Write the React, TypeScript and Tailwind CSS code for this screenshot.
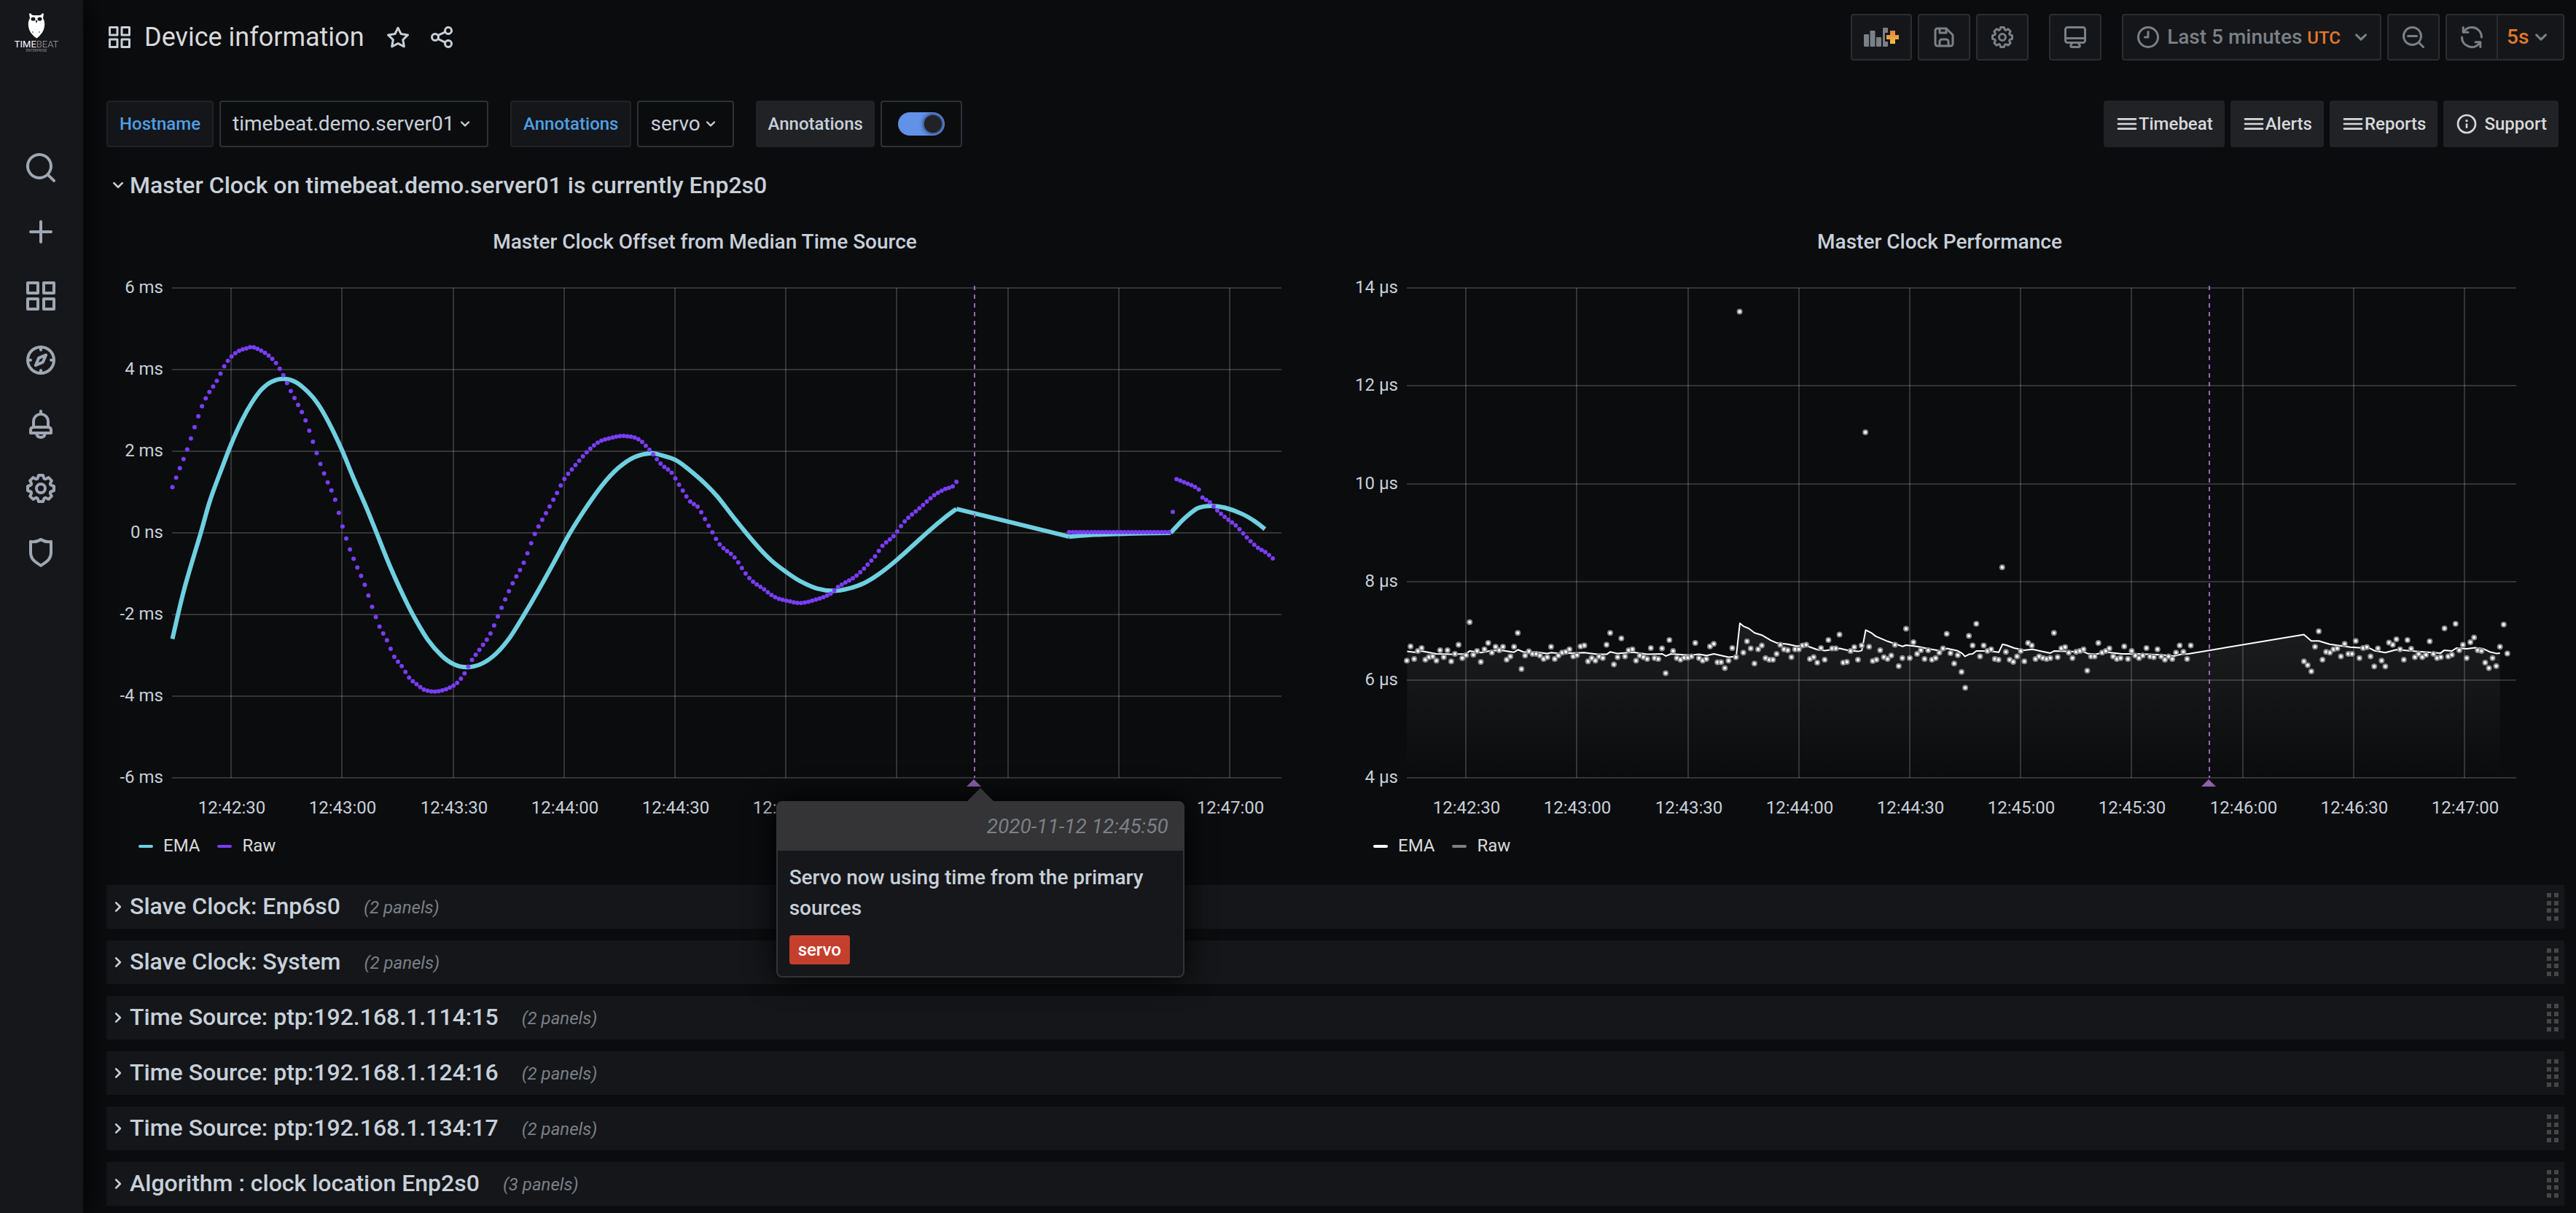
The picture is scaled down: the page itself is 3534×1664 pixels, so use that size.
import { ReactNode, useState } from "react";

type Point = [number, number];

// plot area inside the chart's viewBox
const LEFT = 90;
const RIGHT = 1612;
const TOP = 31;
const BOTTOM = 703;
const SPAN = 300; // seconds

const X_TICKS = [
  "12:42:30",
  "12:43:00",
  "12:43:30",
  "12:44:00",
  "12:44:30",
  "12:45:00",
  "12:45:30",
  "12:46:00",
  "12:46:30",
  "12:47:00",
];

const xOf = (t: number) => LEFT + (t / SPAN) * (RIGHT - LEFT);

const decode =
  (t0: number, perSecond: number, base: number, baseCount: number, perUnit: number) =>
  ([a, b]: Point): Point => [(a - t0) / perSecond, base + (baseCount - b) / perUnit];

const offsetA = decode(175, 9.25, 0, 908.5, 137.2);
const offsetB = decode(-1156.8, 8.838, 0, 365, 107.1);
const perfA = decode(164, 9.25, 6, 1100, 117.1);
const perfB = decode(-1245.2, 8.897, 6, 1100, 117.1);

const offsetEma: Point[][] = [
  [
    ...(
      [
        [176, 1265], [205, 1100], [247, 908], [270, 800], [300, 690], [323, 610], [350, 530], [375, 470],
        [400, 425], [425, 400], [454, 391], [485, 402], [515, 435], [540, 475], [570, 545], [600, 630],
        [630, 728], [660, 820], [690, 920], [720, 1020], [750, 1110], [780, 1190], [815, 1268], [850, 1322],
        [880, 1350], [914, 1360], [950, 1348], [985, 1315], [1020, 1260], [1055, 1185], [1090, 1105],
        [1130, 1008], [1170, 910], [1210, 825], [1250, 750], [1290, 692], [1330, 655], [1373, 641],
        [1400, 648], [1435, 664], [1470, 698], [1510, 745], [1540, 788],
      ] as Point[]
    ).map(offsetA),
    ...(
      [
        [190, 331], [240, 397], [275, 437], [310, 467], [345, 492], [385, 511], [425, 517], [460, 511],
        [495, 498], [530, 475], [570, 441], [610, 402], [650, 362], [690, 325], [718, 302],
      ] as Point[]
    ).map(offsetB),
  ],
  ([[718, 302], [987, 375]] as Point[]).map(offsetB),
  ([[987, 375], [1050, 370], [1130, 367], [1230, 365]] as Point[]).map(offsetB),
  (
    [
      [1230, 365], [1240, 353], [1265, 325], [1295, 300], [1327, 294], [1360, 299], [1400, 315],
      [1430, 334], [1455, 355],
    ] as Point[]
  ).map(offsetB),
];

const offsetRaw: Point[][] = [
  [
    ...(
      [
        [176, 755], [194, 693], [213, 628], [231, 555], [250, 483], [268, 436], [287, 398], [305, 350],
        [323, 317], [342, 297], [360, 289], [375, 284], [398, 296], [416, 312], [434, 336], [454, 380],
        [472, 432], [490, 477], [508, 527], [527, 600], [546, 677], [564, 737], [583, 797], [601, 885],
        [620, 964], [638, 1023], [657, 1083], [675, 1155], [694, 1223], [712, 1268], [731, 1325],
        [750, 1357], [768, 1395], [786, 1416], [805, 1435], [832, 1442], [860, 1434], [888, 1413],
        [907, 1380], [925, 1336], [943, 1303], [971, 1248], [999, 1161], [1027, 1078], [1054, 1011],
        [1082, 914], [1110, 843], [1137, 777], [1156, 728], [1184, 681], [1212, 638], [1240, 605],
        [1268, 591], [1304, 583], [1341, 593], [1369, 629], [1397, 676], [1425, 707], [1443, 746],
        [1471, 803], [1490, 821], [1517, 884], [1545, 947],
      ] as Point[]
    ).map(offsetA),
    ...(
      [
        [187, 429], [223, 484], [258, 513], [285, 534], [320, 545], [346, 549], [382, 540], [417, 525],
        [435, 507], [479, 477], [523, 427], [541, 399], [568, 373], [594, 335], [630, 300], [665, 266],
        [691, 250], [709, 243], [718, 231],
      ] as Point[]
    ).map(offsetB),
  ],
  ([[987, 363], [1230, 363]] as Point[]).map(offsetB),
  ([[1235, 310]] as Point[]).map(offsetB),
  (
    [
      [1244, 224], [1262, 232], [1297, 251], [1305, 271], [1323, 284], [1341, 306], [1367, 330],
      [1385, 345], [1411, 376], [1438, 404], [1456, 415], [1474, 432],
    ] as Point[]
  ).map(offsetB),
];

const perfEma: Point[] = [
  ...(
    [
      [165, 1032], [183, 1034], [200, 1031], [238, 1038], [275, 1039], [312, 1038], [321, 1031],
      [350, 1035], [375, 1030], [405, 1030], [432, 1034], [442, 1028], [455, 1033], [490, 1034],
      [515, 1037], [525, 1035], [550, 1037], [608, 1035], [640, 1039], [664, 1039], [673, 1033],
      [690, 1037], [730, 1034], [765, 1039], [803, 1038], [812, 1043], [825, 1038], [870, 1041],
      [895, 1039], [914, 1042], [932, 1038], [969, 1046], [988, 1044], [997, 965], [1006, 972],
      [1019, 977], [1034, 988], [1052, 993], [1075, 1006], [1090, 1012], [1117, 1015], [1136, 1019],
      [1168, 1020], [1191, 1028], [1210, 1030], [1247, 1025], [1270, 1030], [1293, 1032], [1302, 1030],
      [1312, 981], [1325, 987], [1337, 996], [1367, 1008], [1404, 1020], [1413, 1017], [1440, 1020],
      [1469, 1026], [1500, 1031], [1515, 1025], [1540, 1030], [1552, 1036],
    ] as Point[]
  ).map(perfA),
  ...(
    [
      [98, 1044], [107, 1039], [116, 1038], [125, 1031], [155, 1031], [179, 1034], [188, 1015],
      [197, 1017], [216, 1024], [240, 1029], [260, 1027], [303, 1036], [312, 1031], [383, 1033],
      [392, 1037], [410, 1039], [440, 1034], [475, 1038], [515, 1038], [570, 1040], [600, 1043],
      [618, 1039], [635, 1038], [913, 992], [931, 1007], [949, 1007], [975, 1015], [1025, 1022],
      [1073, 1025], [1082, 1030], [1109, 1035], [1135, 1028], [1200, 1033], [1242, 1036], [1251, 1029],
      [1269, 1031], [1280, 1024], [1305, 1026], [1325, 1023], [1345, 1026], [1360, 1033], [1376, 1037],
      [1385, 1036],
    ] as Point[]
  ).map(perfB),
];

// one reading per second, before and after the gap in the series
const perfBefore = [
  1054, 1020, 1050, 1031, 1024, 1052, 1046, 1044, 1054, 1029, 1046, 1029, 1056, 1038, 1016, 1048, 1041,
  962, 1040, 1031, 1057, 1027, 1012, 1035, 1021, 1029, 1021, 1052, 1044, 1021, 988, 1074, 1042, 1032,
  1038, 1038, 1042, 1050, 1046, 1021, 1050, 1042, 1035, 1033, 1027, 1044, 1041, 1020, 1018, 1056, 1048,
  1054, 1044, 1048, 1016, 988, 1063, 1046, 1001, 1044, 1029, 1027, 1054, 1042, 1046, 1050, 1024, 1048,
  1050, 1025, 1084, 1005, 1031, 1048, 1052, 1047, 1047, 1044, 1012, 1048, 1054, 1050, 1020, 1014, 1058,
  1058, 1072, 1054, 1024, 1046, 220, 1035, 1008, 1025, 1061, 1027, 1018, 1048, 1052, 1052, 1038, 1016,
  1027, 1029, 1046, 1027, 1027, 1018, 1016, 1050, 1046, 1059, 1024, 1052, 1005, 1025, 1025, 992, 1059,
  1057, 1031, 1022, 1052, 1018, 508, 1021, 1055, 1052, 1029, 1046, 1050, 1042, 1016, 1067, 1048, 978,
  1048, 1010, 1038, 1029, 1050, 1029, 1052, 1048, 1035, 1025, 990, 1036, 1061, 1041, 1081, 1119, 995,
  1018, 966, 1044, 1018, 1031, 1027, 1050, 1052, 831, 1033, 1052, 1057, 1044, 1031, 1056, 1012, 1018,
  1050, 1044, 1048, 1050, 1048, 988, 1046, 1025, 1022, 1035, 1048, 1033, 1031, 1027, 1078, 1044, 1044,
  1012, 1035, 1031, 1025, 1044, 1050, 1048, 1020, 1050, 1031, 1042, 1048, 1042, 1024, 1044, 1046, 1027,
  1044, 1052, 1044, 1050, 1035, 1018, 1033, 1050, 1018,
];
const perfAfter = [
  1056, 1065, 1080, 1021, 984, 1052, 1033, 1035, 1027, 1025, 1044, 1014, 1038, 1038, 1007, 1048, 1024,
  1022, 1044, 1068, 1025, 1054, 1068, 1011, 1016, 1003, 1027, 1052, 1005, 1026, 1046, 1038, 1046, 1040,
  1008, 1038, 1048, 1046, 977, 1044, 1040, 966, 1029, 1016, 1048, 1010, 999, 1029, 1031, 1059, 1072,
  1048, 1067, 1021, 968, 1037,
];
const perfRaw: Point[] = [
  ...perfBefore.map((c, i): Point => [i, 6 + (1100 - c) / 117.1]),
  ...perfAfter.map((c, i): Point => [i + 242.6, 6 + (1100 - c) / 117.1]),
];

// resample to one point per second (hermite between the stored points)
function everySecond(points: Point[]): Point[] {
  if (points.length < 2) return points;
  const slope = (i: number) => {
    const a = points[Math.max(i - 1, 0)];
    const b = points[Math.min(i + 1, points.length - 1)];
    return (b[1] - a[1]) / (b[0] - a[0]);
  };
  const out: Point[] = [];
  const end = points[points.length - 1][0];
  let k = 0;
  for (let t = points[0][0]; t <= end + 0.1; t += 1) {
    while (k < points.length - 2 && points[k + 1][0] < t) k++;
    const [t1, v1] = points[k];
    const [t2, v2] = points[k + 1];
    const h = t2 - t1;
    const s = (t - t1) / h;
    const s2 = s * s;
    const s3 = s2 * s;
    out.push([
      t,
      (2 * s3 - 3 * s2 + 1) * v1 +
        (s3 - 2 * s2 + s) * h * slope(k) +
        (3 * s2 - 2 * s3) * v2 +
        (s3 - s2) * h * slope(k + 1),
    ]);
  }
  return out;
}

function linePath(p: Point[]) {
  return p.map(([x, y], i) => `${i ? "L" : "M"}${x.toFixed(1)} ${y.toFixed(1)}`).join("");
}

// Catmull-Rom spline as bezier segments
function smoothPath(p: Point[]) {
  let d = `M${p[0][0].toFixed(1)} ${p[0][1].toFixed(1)}`;
  for (let i = 0; i < p.length - 1; i++) {
    const a = p[i - 1] ?? p[i];
    const b = p[i];
    const c = p[i + 1];
    const e = p[i + 2] ?? c;
    const nums = [
      b[0] + (c[0] - a[0]) / 6,
      b[1] + (c[1] - a[1]) / 6,
      c[0] - (e[0] - b[0]) / 6,
      c[1] - (e[1] - b[1]) / 6,
      c[0],
      c[1],
    ];
    d += "C" + nums.map((n) => n.toFixed(1)).join(" ");
  }
  return d;
}

const icons = {
  apps: "M10,13H3a1,1,0,0,0-1,1v7a1,1,0,0,0,1,1h7a1,1,0,0,0,1-1V14A1,1,0,0,0,10,13ZM9,20H4V15H9ZM21,2H14a1,1,0,0,0-1,1v7a1,1,0,0,0,1,1h7a1,1,0,0,0,1-1V3A1,1,0,0,0,21,2ZM20,9H15V4h5Zm1,4H14a1,1,0,0,0-1,1v7a1,1,0,0,0,1,1h7a1,1,0,0,0,1-1V14A1,1,0,0,0,21,13Zm-1,7H15V15h5ZM10,2H3A1,1,0,0,0,2,3v7a1,1,0,0,0,1,1h7a1,1,0,0,0,1-1V3A1,1,0,0,0,10,2ZM9,9H4V4H9Z",
  search:
    "M21.71,20.29,18,16.61A9,9,0,1,0,16.61,18l3.68,3.68a1,1,0,0,0,1.42,0A1,1,0,0,0,21.71,20.29ZM11,18a7,7,0,1,1,7-7A7,7,0,0,1,11,18Z",
  plus: "M19,11H13V5a1,1,0,0,0-2,0v6H5a1,1,0,0,0,0,2h6v6a1,1,0,0,0,2,0V13h6a1,1,0,0,0,0-2Z",
  compass:
    "M12,2A10,10,0,1,0,22,12,10,10,0,0,0,12,2Zm1,17.93V19a1,1,0,0,0-2,0v.93A8,8,0,0,1,4.07,13H5a1,1,0,0,0,0-2H4.07A8,8,0,0,1,11,4.07V5a1,1,0,0,0,2,0V4.07A8,8,0,0,1,19.93,11H19a1,1,0,0,0,0,2h.93A8,8,0,0,1,13,19.93ZM15.14,7.55l-5,2.12a1,1,0,0,0-.52.52l-2.12,5a1,1,0,0,0,.21,1.1,1,1,0,0,0,.7.3.93.93,0,0,0,.4-.09l5-2.12a1,1,0,0,0,.52-.52l2.12-5a1,1,0,0,0-1.31-1.31Zm-2.49,5.1-2.28,1,1-2.28,2.28-1Z",
  bell: "M18,13.18V10a6,6,0,0,0-5-5.91V3a1,1,0,0,0-2,0V4.09A6,6,0,0,0,6,10v3.18A3,3,0,0,0,4,16v2a1,1,0,0,0,1,1H8.14a4,4,0,0,0,7.72,0H19a1,1,0,0,0,1-1V16A3,3,0,0,0,18,13.18ZM8,10a4,4,0,0,1,8,0v3H8Zm4,10a2,2,0,0,1-1.72-1h3.44A2,2,0,0,1,12,20Zm6-3H6V16a1,1,0,0,1,1-1H17a1,1,0,0,1,1,1Z",
  cog: "M21.32,9.55l-1.89-.63.89-1.78A1,1,0,0,0,20.13,6L18,3.87a1,1,0,0,0-1.15-.19l-1.78.89-.63-1.89A1,1,0,0,0,13.5,2h-3a1,1,0,0,0-.95.68L8.92,4.57,7.14,3.68A1,1,0,0,0,6,3.87L3.87,6a1,1,0,0,0-.19,1.15l.89,1.78-1.89.63A1,1,0,0,0,2,10.5v3a1,1,0,0,0,.68.95l1.89.63-.89,1.78A1,1,0,0,0,3.87,18L6,20.13a1,1,0,0,0,1.15.19l1.78-.89.63,1.89a1,1,0,0,0,.95.68h3a1,1,0,0,0,.95-.68l.63-1.89,1.78.89A1,1,0,0,0,18,20.13L20.13,18a1,1,0,0,0,.19-1.15l-.89-1.78,1.89-.63A1,1,0,0,0,22,13.5v-3A1,1,0,0,0,21.32,9.55ZM20,12.78l-1.2.4A2,2,0,0,0,17.64,16l.57,1.14-1.1,1.1L16,17.64a2,2,0,0,0-2.79,1.16l-.4,1.2H11.22l-.4-1.2A2,2,0,0,0,8,17.64l-1.14.57-1.1-1.1L6.36,16A2,2,0,0,0,5.2,13.18L4,12.78V11.22l1.2-.4A2,2,0,0,0,6.36,8L5.79,6.89l1.1-1.1L8,6.36A2,2,0,0,0,10.82,5.2l.4-1.2h1.56l.4,1.2A2,2,0,0,0,16,6.36l1.14-.57,1.1,1.1L17.64,8a2,2,0,0,0,1.16,2.79l1.2.4ZM12,8a4,4,0,1,0,4,4A4,4,0,0,0,12,8Zm0,6a2,2,0,1,1,2-2A2,2,0,0,1,12,14Z",
  shield:
    "M19.63,3.65a1,1,0,0,0-.84-.2,8,8,0,0,1-6.22-1.27,1,1,0,0,0-1.14,0A8,8,0,0,1,5.21,3.45a1,1,0,0,0-.84.2A1,1,0,0,0,4,4.43v7.45a9,9,0,0,0,3.77,7.33l3.65,2.6a1,1,0,0,0,1.16,0l3.65-2.6A9,9,0,0,0,20,11.88V4.43A1,1,0,0,0,19.63,3.65ZM18,11.88a7,7,0,0,1-2.93,5.7L12,19.77,8.93,17.58A7,7,0,0,1,6,11.88V5.58a10,10,0,0,0,6-1.39,10,10,0,0,0,6,1.39Z",
  star: "M22,9.67A1,1,0,0,0,21.14,9l-5.69-.83L12.9,3a1,1,0,0,0-1.8,0L8.55,8.16,2.86,9a1,1,0,0,0-.81.68,1,1,0,0,0,.25,1l4.13,4-1,5.68A1,1,0,0,0,6.9,21.44L12,18.77l5.1,2.67a.93.93,0,0,0,.46.12,1,1,0,0,0,.59-.19,1,1,0,0,0,.4-1l-1-5.68,4.13-4A1,1,0,0,0,22,9.67Zm-6.15,4a1,1,0,0,0-.29.88l.72,4.2-3.76-2a1.06,1.06,0,0,0-.94,0l-3.76,2,.72-4.2a1,1,0,0,0-.29-.88l-3-3,4.21-.61a1,1,0,0,0,.76-.55L12,5.7l1.88,3.82a1,1,0,0,0,.76.55l4.21.61Z",
  share:
    "M18,14a4,4,0,0,0-3.08,1.48l-5.1-2.35a3.64,3.64,0,0,0,0-2.26l5.1-2.35A4,4,0,1,0,14,6a4.17,4.17,0,0,0,.07.71L8.79,9.14a4,4,0,1,0,0,5.72l5.28,2.43A4.17,4.17,0,0,0,14,18a4,4,0,1,0,4-4ZM18,4a2,2,0,1,1-2,2A2,2,0,0,1,18,4ZM6,14a2,2,0,1,1,2-2A2,2,0,0,1,6,14Zm12,6a2,2,0,1,1,2-2A2,2,0,0,1,18,20Z",
  save: "M20.71,9.29l-6-6a1,1,0,0,0-.32-.21A1.09,1.09,0,0,0,14,3H6A3,3,0,0,0,3,6V18a3,3,0,0,0,3,3H18a3,3,0,0,0,3-3V10A1,1,0,0,0,20.71,9.29ZM9,5h4V7H9Zm6,14H9V16a1,1,0,0,1,1-1h4a1,1,0,0,1,1,1Zm4-1a1,1,0,0,1-1,1H17V16a3,3,0,0,0-3-3H10a3,3,0,0,0-3,3v3H6a1,1,0,0,1-1-1V6A1,1,0,0,1,6,5H7V8A1,1,0,0,0,8,9h6a1,1,0,0,0,1-1V6.41l4,4Z",
  monitor:
    "M19,2H5A3,3,0,0,0,2,5V15a3,3,0,0,0,3,3H7.64l-.58,1a2,2,0,0,0,0,2,2,2,0,0,0,1.75,1h6.46A2,2,0,0,0,17,21a2,2,0,0,0,0-2l-.59-1H19a3,3,0,0,0,3-3V5A3,3,0,0,0,19,2ZM8.77,20,10,18H14l1.2,2ZM20,15a1,1,0,0,1-1,1H5a1,1,0,0,1-1-1V14H20Zm0-3H4V5A1,1,0,0,1,5,4H19a1,1,0,0,1,1,1Z",
  clock:
    "M12,2A10,10,0,1,0,22,12,10,10,0,0,0,12,2Zm0,18a8,8,0,1,1,8-8A8,8,0,0,1,12,20ZM12,6a1,1,0,0,0-1,1v4H9a1,1,0,0,0,0,2h3a1,1,0,0,0,1-1V7A1,1,0,0,0,12,6Z",
  zoomOut:
    "M21.71,20.29,18,16.61A9,9,0,1,0,16.61,18l3.68,3.68a1,1,0,0,0,1.42,0A1,1,0,0,0,21.71,20.29ZM11,18a7,7,0,1,1,7-7A7,7,0,0,1,11,18Zm4-8H7a1,1,0,0,0,0,2h8a1,1,0,0,0,0-2Z",
  sync: "M19.91,15.51H15.38a1,1,0,0,0,0,2h2.4A8,8,0,0,1,4,12a1,1,0,0,0-2,0,10,10,0,0,0,16.88,7.23V21a1,1,0,0,0,2,0V16.5A1,1,0,0,0,19.91,15.51ZM12,2A10,10,0,0,0,5.12,4.77V3a1,1,0,0,0-2,0V7.5a1,1,0,0,0,1,1h4.5a1,1,0,0,0,0-2H6.22A8,8,0,0,1,20,12a1,1,0,0,0,2,0A10,10,0,0,0,12,2Z",
  angleDown:
    "M17,9.17a1,1,0,0,0-1.41,0L12,12.71,8.46,9.17a1,1,0,0,0-1.41,0,1,1,0,0,0,0,1.42l4.24,4.24a1,1,0,0,0,1.42,0L17,10.59A1,1,0,0,0,17,9.17Z",
  angleRight:
    "M14.83,11.29,10.59,7.05a1,1,0,0,0-1.42,0,1,1,0,0,0,0,1.41L12.71,12,9.17,15.54a1,1,0,0,0,0,1.41,1,1,0,0,0,.71.29,1,1,0,0,0,.71-.29l4.24-4.24A1,1,0,0,0,14.83,11.29Z",
  bars: "M3,8H21a1,1,0,0,0,0-2H3A1,1,0,0,0,3,8Zm18,8H3a1,1,0,0,0,0,2H21a1,1,0,0,0,0-2Zm0-5H3a1,1,0,0,0,0,2H21a1,1,0,0,0,0-2Z",
  info: "M12,2A10,10,0,1,0,22,12,10,10,0,0,0,12,2Zm0,18a8,8,0,1,1,8-8A8,8,0,0,1,12,20Zm0-8.5a1,1,0,0,0-1,1v3a1,1,0,0,0,2,0v-3A1,1,0,0,0,12,11.5Zm0-4a1.25,1.25,0,1,0,1.25,1.25A1.25,1.25,0,0,0,12,7.5Z",
};

type IconName = keyof typeof icons;

function Icon({ name, className = "size-9" }: { name: IconName; className?: string }) {
  return (
    <svg viewBox="0 0 24 24" fill="currentColor" aria-hidden="true" className={`shrink-0 ${className}`}>
      <path d={icons[name]} />
    </svg>
  );
}

function AddPanelIcon() {
  return (
    <svg viewBox="0 0 48 36" fill="currentColor" aria-hidden="true" className="h-9 w-12 shrink-0">
      <defs>
        <linearGradient id="plus" x1="0" y1="0" x2="0" y2="1">
          <stop offset="0" stopColor="#e3803f" />
          <stop offset="1" stopColor="#efc23f" />
        </linearGradient>
      </defs>
      <rect x="0" y="14" width="7" height="17" rx="1" />
      <rect x="8.5" y="9" width="7" height="22" rx="1" />
      <rect x="17" y="18" width="7" height="13" rx="1" />
      <path d="M27 5h5a1 1 0 0 1 1 1v6h-4v12h4v6a1 1 0 0 1-1 1h-5a1 1 0 0 1-1-1V6a1 1 0 0 1 1-1Z" />
      <path d="M36 9h7v6h5v6h-5v6h-7v-6h-5v-6h5Z" fill="url(#plus)" />
    </svg>
  );
}

function Logo() {
  return (
    <svg viewBox="0 0 64 56" className="h-14 w-16" role="img" aria-label="Timebeat Enterprise">
      <path
        d="M24 2q1 3 4 3h8q3 0 4-3l2 1-1 6q3 5 2 11-1 7-5 11-3 4-5.500 5.500Q29 35 26 31q-4-4-5-11-1-6 2-11l-1-6Z"
        fill="#fff"
      />
      <ellipse cx="27.500" cy="10" rx="3" ry="2.600" fill="#16171b" />
      <ellipse cx="36.500" cy="10" rx="3" ry="2.600" fill="#16171b" />
      <path d="m30.500 12 1.500 4 1.500-4Z" fill="#16171b" />
      <circle cx="27" cy="28" r="1" fill="#777" />
      <circle cx="36" cy="28" r="1" fill="#777" />
      <text x="32" y="49" textAnchor="middle" fill="#fff" className="text-[13px]">
        TIME
        <tspan className="font-light" fill="#a8a9ab">
          BEAT
        </tspan>
      </text>
      <text x="32" y="55" textAnchor="middle" fill="#8d8e91" className="text-[5px]">
        ENTERPRISE
      </text>
    </svg>
  );
}

function Sidebar() {
  const items: [IconName, string][] = [
    ["search", "Search"],
    ["plus", "Create"],
    ["apps", "Dashboards"],
    ["compass", "Explore"],
    ["bell", "Alerting"],
    ["cog", "Configuration"],
    ["shield", "Server admin"],
  ];
  return (
    <nav className="z-10 flex w-[114px] shrink-0 flex-col items-center bg-[#16171b] pr-0.5 shadow-[0_0_40px_black]">
      <a href="#home" className="mt-4 mr-3">
        <Logo />
      </a>
      <ul className="mt-[134px] flex flex-col gap-10">
        {items.map(([icon, label]) => (
          <li key={label}>
            <a href="#nav" aria-label={label} className="block text-[#9fa7b3]">
              <Icon name={icon} className="size-12" />
            </a>
          </li>
        ))}
      </ul>
    </nav>
  );
}

const toolButton =
  "flex h-16 items-center rounded-[4px] border-2 border-[#2b2d30] bg-[#141619] text-[#7b8087]";

function ToolButton({ label, children }: { label: string; children: ReactNode }) {
  return (
    <button type="button" aria-label={label} className={`${toolButton} px-4`}>
      {children}
    </button>
  );
}

function Header() {
  return (
    <header className="flex h-[100px] items-center pt-0.5">
      <Icon name="apps" className="size-9 text-[#c7d0d9]" />
      <h1 className="ml-4 text-[36px] text-[#d8d9da]">Device information</h1>
      <button type="button" aria-label="Mark as favorite" className="ml-7 text-[#c7d0d9]">
        <Icon name="star" />
      </button>
      <button type="button" aria-label="Share dashboard" className="ml-6 text-[#c7d0d9]">
        <Icon name="share" />
      </button>
      <div className="ml-auto flex gap-2">
        <ToolButton label="Add panel">
          <AddPanelIcon />
        </ToolButton>
        <ToolButton label="Save dashboard">
          <Icon name="save" />
        </ToolButton>
        <ToolButton label="Dashboard settings">
          <Icon name="cog" />
        </ToolButton>
        <div className="mx-5">
          <ToolButton label="Cycle view mode">
            <Icon name="monitor" />
          </ToolButton>
        </div>
        <button type="button" className={`${toolButton} gap-2 pr-2 pl-4 text-[28px] font-medium`}>
          <Icon name="clock" />
          <span>
            Last 5 minutes <span className="text-[24px] text-[#e0792c]">UTC</span>
          </span>
          <Icon name="angleDown" className="ml-0.5 size-9" />
        </button>
        <ToolButton label="Zoom out">
          <Icon name="zoomOut" />
        </ToolButton>
        <div className="flex">
          <button type="button" aria-label="Refresh" className={`${toolButton} rounded-r-none px-4`}>
            <Icon name="sync" />
          </button>
          <div className="relative -ml-0.5">
            <select
              aria-label="Refresh interval"
              className={`${toolButton} appearance-none rounded-l-none pr-[46px] pl-3 text-[28px] font-medium text-[#e0792c]`}
            >
              <option>5s</option>
            </select>
            <Icon
              name="angleDown"
              className="pointer-events-none absolute top-3.5 right-3.5 size-9 text-[#7b8087]"
            />
          </div>
        </div>
      </div>
    </header>
  );
}

function Variable({ id, label, value }: { id: string; label: string; value: string }) {
  return (
    <div className="flex gap-2">
      <label
        htmlFor={id}
        className="flex h-16 items-center rounded-[4px] border-2 border-[#202226] bg-[#141619] px-4 text-[24px] font-medium text-[#4f9fe3]"
      >
        {label}
      </label>
      <div className="relative">
        <select
          id={id}
          className="h-16 appearance-none rounded-[4px] border-2 border-[#2c3235] bg-[#0b0c0e] pr-11 pl-4 text-[28px] text-[#c7d0d9]"
        >
          <option>{value}</option>
        </select>
        <Icon
          name="angleDown"
          className="pointer-events-none absolute top-4.5 right-4.5 size-7 text-[#c7d0d9]"
        />
      </div>
    </div>
  );
}

function SubMenu() {
  const [annotations, setAnnotations] = useState(true);
  const links: [IconName, string][] = [
    ["bars", "Timebeat"],
    ["bars", "Alerts"],
    ["bars", "Reports"],
    ["info", "Support"],
  ];
  return (
    <div className="mt-[38px] flex items-center gap-[30px]">
      <Variable id="hostname" label="Hostname" value="timebeat.demo.server01" />
      <Variable id="annotation-tag" label="Annotations" value="servo" />
      <div className="flex gap-2">
        <label
          htmlFor="annotations"
          className="flex h-16 items-center rounded-[4px] bg-[#202226] px-4 text-[24px] font-medium text-[#c7d0d9]"
        >
          Annotations
        </label>
        <div className="flex h-16 w-28 items-center justify-center rounded-[4px] border-2 border-[#2c3235]">
          <input
            id="annotations"
            type="checkbox"
            role="switch"
            checked={annotations}
            onChange={(e) => setAnnotations(e.target.checked)}
            className="flex h-8 w-16 appearance-none items-center rounded-full bg-[#343b40] px-1 before:size-6 before:rounded-full before:bg-[#202226] before:shadow-[0_0_6px_black] checked:justify-end checked:bg-[#6291e8]"
          />
        </div>
      </div>
      <div className="mr-2 ml-auto flex gap-2">
        {links.map(([icon, label]) => (
          <a
            key={label}
            href="#link"
            className={`flex h-16 items-center rounded-[4px] bg-[#202226] px-4 text-[24px] font-medium text-[#d8d9da] ${
              icon === "info" ? "gap-2" : ""
            }`}
          >
            <Icon name={icon} className="size-8" />
            {label}
          </a>
        ))}
      </div>
    </div>
  );
}

function Legend({ raw, ema }: { raw: string; ema: string }) {
  return (
    <ul className="flex h-16 items-center gap-6 pl-11 text-[24px] text-[#d8d9da]">
      <li className="flex items-center gap-3.5">
        <span className={`mt-0.5 h-1 w-5 rounded-full ${ema}`} />
        EMA
      </li>
      <li className="flex items-center gap-3.5">
        <span className={`mt-0.5 h-1 w-5 rounded-full ${raw}`} />
        Raw
      </li>
    </ul>
  );
}

function Chart({ labels, title, children }: { labels: string[]; title: string; children: ReactNode }) {
  const step = (BOTTOM - TOP) / (labels.length - 1);
  const mark = Math.round(xOf(217));
  return (
    <svg viewBox="0 0 1642 764" className="block h-auto w-full" role="img" aria-label={title}>
      {labels.map((label, i) => (
        <g key={label}>
          <path
            d={`M${LEFT} ${Math.round(TOP + i * step)}H${RIGHT}`}
            stroke="#fff"
            strokeOpacity="0.17"
            strokeWidth="2"
          />
          <text
            x="78"
            y={Math.round(TOP + i * step) + 7}
            textAnchor="end"
            fill="#c7d0d9"
            className="text-[24px]"
          >
            {label}
          </text>
        </g>
      ))}
      {X_TICKS.map((label, i) => {
        const x = Math.round(xOf(16 + i * 30));
        return (
          <g key={label}>
            <path d={`M${x} ${TOP}V${BOTTOM}`} stroke="#fff" strokeOpacity="0.17" strokeWidth="2" />
            <text x={x + 1} y="752" textAnchor="middle" fill="#c7d0d9" className="text-[24px]">
              {label}
            </text>
          </g>
        );
      })}
      {children}
      <path d={`M${mark} 28V${BOTTOM}`} stroke="#9a68b8" strokeWidth="2" strokeDasharray="6 6" />
      <path d={`M${mark - 11} 715l10-10 10 10Z`} fill="#8f5fae" />
    </svg>
  );
}

function OffsetChart() {
  const toPx = ([t, v]: Point): Point => [xOf(t), 367 - v * 56];
  return (
    <Chart
      title="Master Clock Offset from Median Time Source"
      labels={["6 ms", "4 ms", "2 ms", "0 ns", "-2 ms", "-4 ms", "-6 ms"]}
    >
      <g fill="none" stroke="#6ed0e0" strokeWidth="6" strokeLinejoin="round">
        {offsetEma.map((part, i) => (
          <path key={i} d={smoothPath(part.map(toPx))} />
        ))}
      </g>
      <g fill="#7a3df5">
        {offsetRaw
          .flatMap(everySecond)
          .map(toPx)
          .map(([x, y]) => (
            <circle key={x} cx={x.toFixed(1)} cy={y.toFixed(1)} r="3" />
          ))}
      </g>
    </Chart>
  );
}

function PerformanceChart() {
  const toPx = ([t, v]: Point): Point => [xOf(t), BOTTOM - (v - 4) * 67.2];
  const line = linePath(perfEma.map(toPx));
  return (
    <Chart title="Master Clock Performance" labels={["14 µs", "12 µs", "10 µs", "8 µs", "6 µs", "4 µs"]}>
      <defs>
        <linearGradient id="area" x1="0" y1="0" x2="0" y2="1">
          <stop offset="0" stopColor="#fff" stopOpacity="0.07" />
          <stop offset="1" stopColor="#fff" stopOpacity="0" />
        </linearGradient>
      </defs>
      <path d={`${line}V${BOTTOM}H${LEFT}Z`} fill="url(#area)" />
      <path d={line} fill="none" stroke="#fff" strokeWidth="2" strokeLinejoin="round" />
      <g fill="#fff" stroke="#8a8a8a" strokeWidth="2">
        {perfRaw.map(toPx).map(([x, y]) => (
          <circle key={x} cx={x.toFixed(1)} cy={y.toFixed(1)} r="3" />
        ))}
      </g>
    </Chart>
  );
}

function AnnotationTooltip() {
  return (
    <div className="absolute top-[799px] left-[73%] z-10 w-[560px] -translate-x-1/2 rounded-[8px] border-2 border-[#343436] bg-[#16171a] shadow-[0_0_40px_black]">
      <svg
        viewBox="0 0 38 19"
        aria-hidden="true"
        className="absolute -top-5 left-1/2 h-[19px] w-[38px] -translate-x-1/2"
      >
        <path d="M0 19 19 0l19 19Z" fill="#343436" />
      </svg>
      <div className="bg-[#343436] px-5 py-3 text-right text-[28px] leading-[42px] text-[#7b8087] italic">
        2020-11-12 12:45:50
      </div>
      <div className="p-4">
        <p className="text-[28px] leading-[42px] font-medium text-[#c7d0d9]">
          Servo now using time from the primary sources
        </p>
        <span className="mt-4 inline-flex h-10 items-center rounded-[4px] bg-[#c4402d] px-3 text-[24px] font-medium text-white">
          servo
        </span>
      </div>
    </div>
  );
}

function Panel({ title, children }: { title: string; children: ReactNode }) {
  return (
    <section className="relative">
      <h2 className="flex h-16 items-center justify-center text-[28px] font-medium text-[#c7d0d9]">
        {title}
      </h2>
      {children}
    </section>
  );
}

function CollapsedRow({ title, panels }: { title: string; panels: number }) {
  return (
    <div className="flex h-[60px] items-center bg-[#141619] pr-2">
      <button type="button" className="flex items-center text-[32px] font-medium text-[#c7d0d9]">
        <Icon name="angleRight" className="size-8" />
        <span className="pb-0.5">{title}</span>
      </button>
      <span className="ml-8 pt-0.5 text-[24px] text-[#7b8087] italic">({panels} panels)</span>
      <svg viewBox="0 0 16 38" fill="#464646" aria-hidden="true" className="ml-auto h-[38px] w-4">
        {[0, 11, 21, 32].map((y) => (
          <g key={y}>
            <rect x="0" y={y} width="6" height="6" />
            <rect x="10" y={y} width="6" height="6" />
          </g>
        ))}
      </svg>
    </div>
  );
}

const rows = [
  { title: "Slave Clock: Enp6s0", panels: 2 },
  { title: "Slave Clock: System", panels: 2 },
  { title: "Time Source: ptp:192.168.1.114:15", panels: 2 },
  { title: "Time Source: ptp:192.168.1.124:16", panels: 2 },
  { title: "Time Source: ptp:192.168.1.134:17", panels: 2 },
  { title: "Algorithm : clock location Enp2s0", panels: 3 },
];

export default function App() {
  return (
    <div className="flex min-h-screen bg-[#0b0c0e] font-['Roboto','Liberation_Sans',sans-serif]">
      <Sidebar />
      <main className="min-w-0 flex-1 pr-4 pb-2.5 pl-8">
        <Header />
        <SubMenu />
        <button
          type="button"
          className="mt-[22px] flex h-[60px] items-center text-[32px] font-medium text-[#c7d0d9]"
        >
          <Icon name="angleDown" className="size-8" />
          Master Clock on timebeat.demo.server01 is currently Enp2s0
        </button>
        <div className="mt-4 grid grid-cols-2 gap-[52px] pr-9">
          <Panel title="Master Clock Offset from Median Time Source">
            <OffsetChart />
            <Legend ema="bg-[#6ed0e0]" raw="bg-[#7a3df5]" />
            <AnnotationTooltip />
          </Panel>
          <Panel title="Master Clock Performance">
            <PerformanceChart />
            <Legend ema="bg-white" raw="bg-[#808080]" />
          </Panel>
        </div>
        <div className="mt-[22px] flex flex-col gap-4">
          {rows.map((row) => (
            <CollapsedRow key={row.title} title={row.title} panels={row.panels} />
          ))}
        </div>
      </main>
    </div>
  );
}
